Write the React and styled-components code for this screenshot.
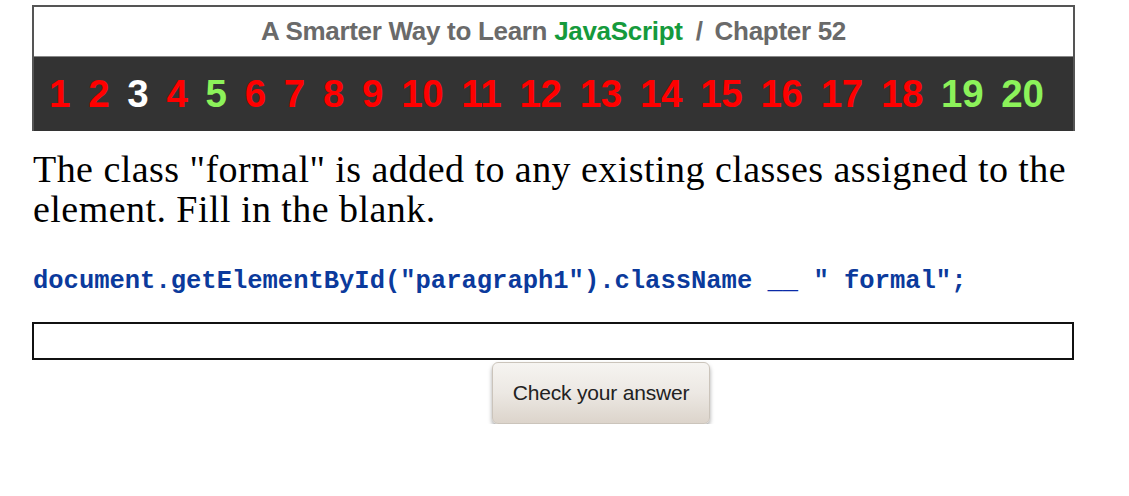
import React from "react";
import styled, { createGlobalStyle } from "styled-components";

const Global = createGlobalStyle`
  html, body { margin: 0; padding: 0; background: #fff; }
  body { font-family: "Liberation Serif", serif; }
`;

const Page = styled.div`
  width: 1043px;
  padding: 5px 0 0 32px;
  display: flex;
  flex-direction: column;
`;

const Header = styled.div`
  border: 2px solid #555;
  border-bottom: none;
  display: flex;
  flex-direction: column;
`;

const TitleBar = styled.div`
  height: 49px;
  background: #fff;
  border-bottom: 1px solid #888;
  display: flex;
  align-items: center;
  justify-content: center;
  font-family: "Liberation Sans", Arial, sans-serif;
  font-weight: bold;
  font-size: 26px;
  letter-spacing: -0.3px;
  color: #6a6a6a;
`;

const Green = styled.span`
  color: #159a3c;
`;

const Slash = styled.span`
  margin: 0 12px 0 13px;
`;

const NumberBar = styled.div`
  height: 74px;
  background: #333;
  display: flex;
  align-items: center;
  gap: 18px;
  padding-left: 15px;
  font-family: "Liberation Sans", Arial, sans-serif;
  font-weight: bold;
  font-size: 38.5px;
  letter-spacing: -0.3px;
`;

const Num = styled.span`
  color: ${(p) => p.$color};
`;

const Question = styled.p`
  margin: 18px 0 0 1px;
  font-family: "Liberation Serif", Georgia, serif;
  font-size: 38px;
  letter-spacing: 0.45px;
  line-height: 40px;
  color: #000;
`;

const Code = styled.div`
  margin: 38px 0 0 1px;
  font-family: "Liberation Mono", "Courier New", monospace;
  font-weight: bold;
  font-size: 25.5px;
  line-height: 30px;
  color: #0b3a9c;
  white-space: pre;
`;

const Blank = styled.span`
  color: #0a2aa8;
`;

const Input = styled.input`
  margin-top: 25px;
  box-sizing: border-box;
  width: 1042px;
  height: 38px;
  border: 2px solid #111;
  border-radius: 0;
  outline: none;
  padding: 0 6px;
  font-size: 20px;
`;

const ButtonRow = styled.div`
  display: flex;
  padding-left: 460px;
  margin-top: 2px;
`;

const Button = styled.button`
  width: 218px;
  height: 62px;
  border: 1px solid #cbc4bb;
  border-radius: 6px;
  background: linear-gradient(#f6f4f1, #ece8e3 50%, #dcd4cb);
  box-shadow: 0 3px 4px rgba(0, 0, 0, 0.35);
  font-family: "Liberation Sans", Arial, sans-serif;
  font-size: 21px;
  letter-spacing: -0.2px;
  color: #222;
  cursor: pointer;
`;

const numbers = Array.from({ length: 20 }, (_, i) => i + 1);
const colorFor = (n) => {
  if (n === 3) return "#ffffff";
  if (n === 5 || n === 19 || n === 20) return "#8cf25a";
  return "#ff0000";
};

export default function App() {
  return (
    <>
      <Global />
      <Page>
        <Header>
          <TitleBar>
            A Smarter Way to Learn&nbsp;<Green>JavaScript</Green>
            <Slash>/</Slash>Chapter 52
          </TitleBar>
          <NumberBar>
            {numbers.map((n) => (
              <Num key={n} $color={colorFor(n)}>
                {n}
              </Num>
            ))}
          </NumberBar>
        </Header>
        <Question>
          The class "formal" is added to any existing classes assigned to the
          element. Fill in the blank.
        </Question>
        <Code>
          document.getElementById("paragraph1").className <Blank>__</Blank> " formal";
        </Code>
        <Input type="text" />
        <ButtonRow>
          <Button>Check your answer</Button>
        </ButtonRow>
      </Page>
    </>
  );
}
